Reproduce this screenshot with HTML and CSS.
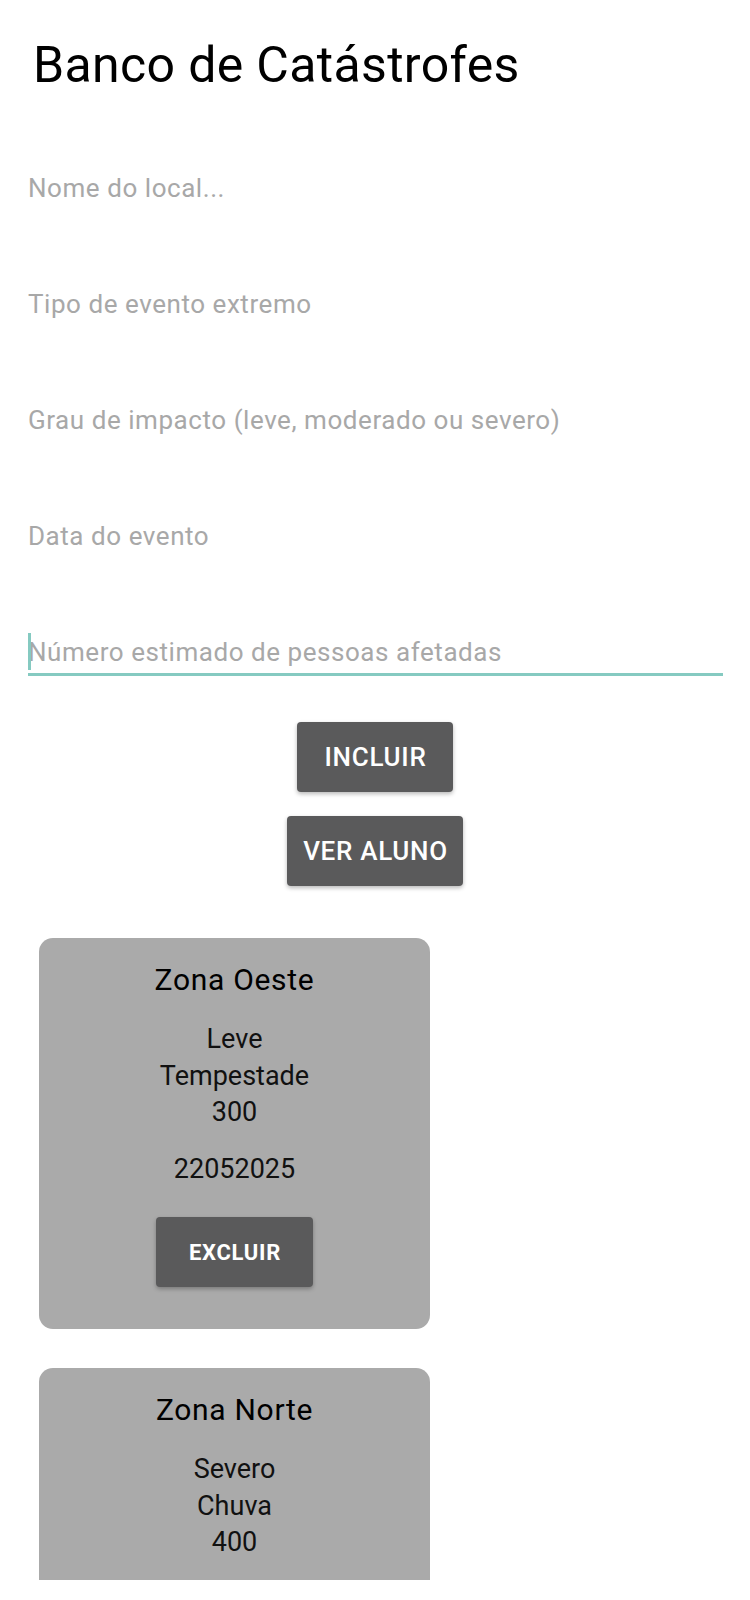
FILE: index.html
```html
<!DOCTYPE html>
<html lang="pt-BR">
<head>
<meta charset="utf-8">
<title>Banco de Catástrofes</title>
<link rel="stylesheet" href="styles.css">
</head>
<body>
<div class="screen">
  <h1 class="title">Banco de Catástrofes</h1>
  <form class="form">
    <div class="field"><input class="input" type="text" placeholder="Nome do local..."></div>
    <div class="field"><input class="input" type="text" placeholder="Tipo de evento extremo"></div>
    <div class="field"><input class="input" type="text" placeholder="Grau de impacto (leve, moderado ou severo)"></div>
    <div class="field"><input class="input" type="text" placeholder="Data do evento"></div>
    <div class="field field-focused"><span class="caret"></span><input class="input" type="text" placeholder="Número estimado de pessoas afetadas"></div>
  </form>
  <div class="actions">
    <button class="btn btn-include" type="button">Incluir</button>
    <button class="btn btn-view" type="button">Ver aluno</button>
  </div>
  <div class="list">
    <div class="card">
      <div class="card-title">Zona Oeste</div>
      <div class="card-body">
        <div>Leve</div>
        <div>Tempestade</div>
        <div>300</div>
      </div>
      <div class="card-date">22052025</div>
      <button class="btn btn-small" type="button">Excluir</button>
    </div>
    <div class="card">
      <div class="card-title">Zona Norte</div>
      <div class="card-body">
        <div>Severo</div>
        <div>Chuva</div>
        <div>400</div>
      </div>
    </div>
  </div>
</div>
</body>
</html>
```

FILE: styles.css
```css
* { box-sizing: border-box; }
html, body { margin: 0; padding: 0; background: #ffffff; }
body { font-family: Roboto, "Noto Sans", "Liberation Sans", sans-serif; color: #000; }

.screen {
  height: 1580px;
  overflow: hidden;
  background: #ffffff;
}

.title {
  margin: 35px 0 0 33px;
  font-size: 50px;
  font-weight: 400;
  line-height: 61px;
  letter-spacing: 0.35px;
  color: #000;
}

.form {
  margin: 0 27px 0 28px;
  display: flex;
  flex-direction: column;
}

.field {
  position: relative;
  padding-top: 77px;
  padding-bottom: 6px;
  border-bottom: 3px solid transparent;
}
.field-focused { border-bottom-color: #85cac1; }

.input {
  display: block;
  width: 100%;
  height: 30px;
  padding: 0;
  margin: 0;
  border: none;
  outline: none;
  background: transparent;
  font-family: Roboto, "Noto Sans", "Liberation Sans", sans-serif;
  font-size: 26px;
  line-height: 30px;
  letter-spacing: 0.55px;
  color: #000;
}
.input::placeholder { color: #a8a8a8; opacity: 1; }

.caret {
  position: absolute;
  left: 0;
  top: 73px;
  width: 3px;
  height: 37px;
  background: #85cac1;
}

.actions {
  margin-top: 46px;
  display: flex;
  flex-direction: column;
  align-items: center;
  gap: 24px;
}

.btn {
  height: 70px;
  padding: 0 0 0 1px;
  border: none;
  border-radius: 4px;
  background: #5a5a5b;
  color: #ffffff;
  font-family: Roboto, "Noto Sans", "Liberation Sans", sans-serif;
  font-size: 26px;
  font-weight: 500;
  letter-spacing: 0.7px;
  text-transform: uppercase;
  text-align: center;
  box-shadow: 0 2px 4px rgba(0, 0, 0, 0.28);
}
.btn-include { width: 156px; }
.btn-view { width: 176px; }

.list {
  margin: 52px 0 0 39px;
  display: flex;
  flex-direction: column;
  gap: 39px;
}

.card {
  width: 391px;
  padding: 24px 0 42px;
  background: #aaaaaa;
  border-radius: 14px;
  display: flex;
  flex-direction: column;
  align-items: center;
  text-align: center;
}

.card-title {
  font-size: 30px;
  line-height: 36px;
  letter-spacing: 0.7px;
  color: #000;
}

.card-body {
  margin-top: 23px;
  font-size: 27px;
  line-height: 36.5px;
  color: #111;
}

.card-date {
  margin-top: 20px;
  font-size: 27px;
  line-height: 36.5px;
  color: #111;
}

.btn-small {
  width: 157px;
  margin-top: 30px;
  font-size: 22px;
  font-weight: 700;
}
```
